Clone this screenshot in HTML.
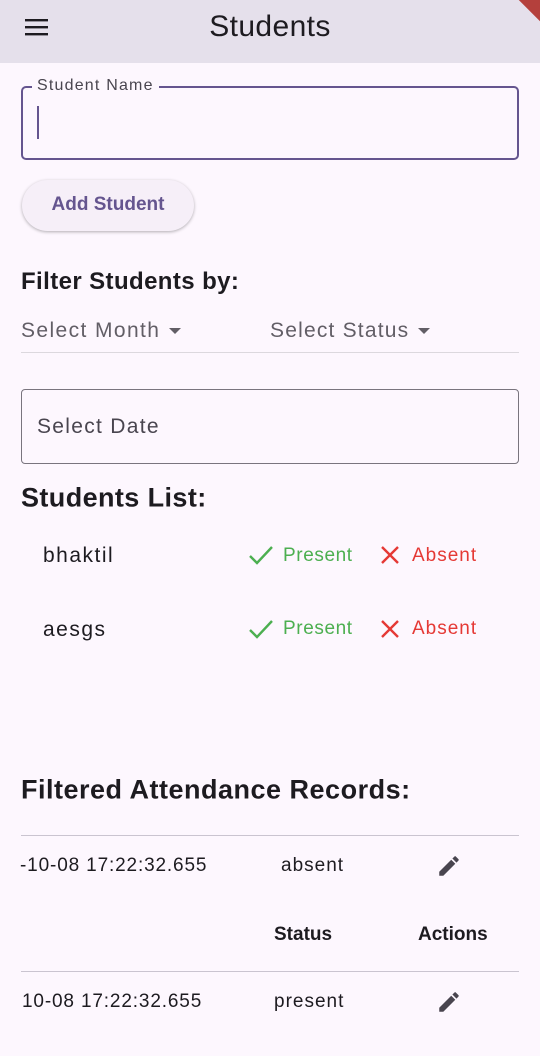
<!DOCTYPE html>
<html><head><meta charset="utf-8"><style>
*{margin:0;padding:0;box-sizing:border-box}
body{width:540px;height:1056px;background:#fdf7fe;font-family:"Liberation Sans",sans-serif;color:#1d1b20;position:relative;overflow:hidden}
.a{position:absolute;white-space:nowrap}
.c{transform:translateY(-50%)}
</style></head><body>
<div class="a" style="left:0;top:0;width:540px;height:63px;background:#e5e0eb"></div>
<div class="a" style="left:505px;top:-20px;width:60px;height:30px;background:#b4403c;transform:rotate(45deg)"></div>
<svg class="a" style="left:24px;top:16px" width="26" height="22" viewBox="0 0 26 22"><rect x="1" y="3" width="23" height="2.4" fill="#1d1b20"/><rect x="1" y="10" width="23" height="2.4" fill="#1d1b20"/><rect x="1" y="17" width="23" height="2.4" fill="#1d1b20"/></svg>
<div class="a c" style="left:0;width:540px;text-align:center;top:27px;font-size:30px;letter-spacing:0.4px">Students</div>

<div class="a" style="left:21px;top:86px;width:498px;height:74px;border:2.5px solid #65558f;border-radius:5px"></div>
<div class="a c" style="left:32px;top:86px;padding:0 5px;background:#fdf7fe;font-size:16px;color:#49454f;letter-spacing:1.2px">Student Name</div>
<div class="a" style="left:37px;top:106px;width:2px;height:33px;background:#65558f"></div>

<div class="a" style="left:22px;top:180px;width:172px;height:51px;border-radius:26px;background:#f6eff8;box-shadow:0 1px 3px rgba(0,0,0,.3)"></div>
<div class="a c" style="left:22px;width:172px;text-align:center;top:205px;font-size:19px;color:#65558f;font-weight:bold">Add Student</div>

<div class="a c" style="left:21px;top:282px;font-size:24px;font-weight:bold;letter-spacing:0.4px">Filter Students by:</div>
<div class="a c" style="left:21px;top:331px;font-size:21px;color:#625e66;letter-spacing:1.4px">Select Month</div>
<svg class="a" style="left:168px;top:327px" width="14" height="8"><path d="M1 1h12L7 7z" fill="#625e66"/></svg>
<div class="a c" style="left:270px;top:331px;font-size:21px;color:#625e66;letter-spacing:1.2px">Select Status</div>
<svg class="a" style="left:417px;top:327px" width="14" height="8"><path d="M1 1h12L7 7z" fill="#625e66"/></svg>
<div class="a" style="left:21px;top:352px;width:498px;height:1px;background:#dcd8de"></div>

<div class="a" style="left:21px;top:389px;width:498px;height:75px;border:1.3px solid #79747e;border-radius:4px"></div>
<div class="a c" style="left:37px;top:427px;font-size:21px;color:#49454f;letter-spacing:1.3px">Select Date</div>

<div class="a c" style="left:21px;top:498px;font-size:27px;font-weight:bold;letter-spacing:0.4px">Students List:</div>

<div class="a c" style="left:43px;top:556px;font-size:21px;letter-spacing:1.5px">bhaktil</div>
<svg class="a" style="left:248px;top:544px" width="26" height="22" viewBox="0 0 26 22"><path d="M2 12l7 7L24 3" fill="none" stroke="#4caf50" stroke-width="2.4"/></svg>
<div class="a c" style="left:283px;top:556px;font-size:19px;color:#4caf50;letter-spacing:0.6px">Present</div>
<svg class="a" style="left:380px;top:545px" width="20" height="20" viewBox="0 0 20 20"><path d="M2 2l16 16M18 2L2 18" stroke="#e53935" stroke-width="2.4"/></svg>
<div class="a c" style="left:412px;top:556px;font-size:19px;color:#e53935;letter-spacing:1px">Absent</div>

<div class="a c" style="left:43px;top:630px;font-size:21px;letter-spacing:1.5px">aesgs</div>
<svg class="a" style="left:248px;top:618px" width="26" height="22" viewBox="0 0 26 22"><path d="M2 12l7 7L24 3" fill="none" stroke="#4caf50" stroke-width="2.4"/></svg>
<div class="a c" style="left:283px;top:629px;font-size:19px;color:#4caf50;letter-spacing:0.6px">Present</div>
<svg class="a" style="left:380px;top:619px" width="20" height="20" viewBox="0 0 20 20"><path d="M2 2l16 16M18 2L2 18" stroke="#e53935" stroke-width="2.4"/></svg>
<div class="a c" style="left:412px;top:629px;font-size:19px;color:#e53935;letter-spacing:1px">Absent</div>

<div class="a c" style="left:21px;top:790px;font-size:27px;font-weight:bold;letter-spacing:0.5px">Filtered Attendance Records:</div>
<div class="a" style="left:21px;top:835px;width:498px;height:1px;background:#cac4d0"></div>
<div class="a c" style="left:20px;top:866px;font-size:19px;letter-spacing:0.85px">-10-08 17:22:32.655</div>
<div class="a c" style="left:281px;top:866px;font-size:19px;letter-spacing:1px">absent</div>
<svg class="a" style="left:436px;top:853px" width="26" height="26" viewBox="0 0 24 24"><path d="M3 17.25V21h3.75L17.81 9.94l-3.75-3.75L3 17.25zM20.71 7.04a1 1 0 000-1.41l-2.34-2.34a1 1 0 00-1.41 0l-1.83 1.83 3.75 3.75 1.83-1.83z" fill="#49454f"/></svg>
<div class="a c" style="left:274px;top:935px;font-size:19px;font-weight:bold;color:#1d1b20">Status</div>
<div class="a c" style="left:418px;top:935px;font-size:19px;font-weight:bold;color:#1d1b20">Actions</div>
<div class="a" style="left:21px;top:971px;width:498px;height:1px;background:#cac4d0"></div>
<div class="a c" style="left:22px;top:1002px;font-size:19px;letter-spacing:0.85px">10-08 17:22:32.655</div>
<div class="a c" style="left:274px;top:1002px;font-size:19px;letter-spacing:1px">present</div>
<svg class="a" style="left:436px;top:989px" width="26" height="26" viewBox="0 0 24 24"><path d="M3 17.25V21h3.75L17.81 9.94l-3.75-3.75L3 17.25zM20.71 7.04a1 1 0 000-1.41l-2.34-2.34a1 1 0 00-1.41 0l-1.83 1.83 3.75 3.75 1.83-1.83z" fill="#49454f"/></svg>
</body></html>
